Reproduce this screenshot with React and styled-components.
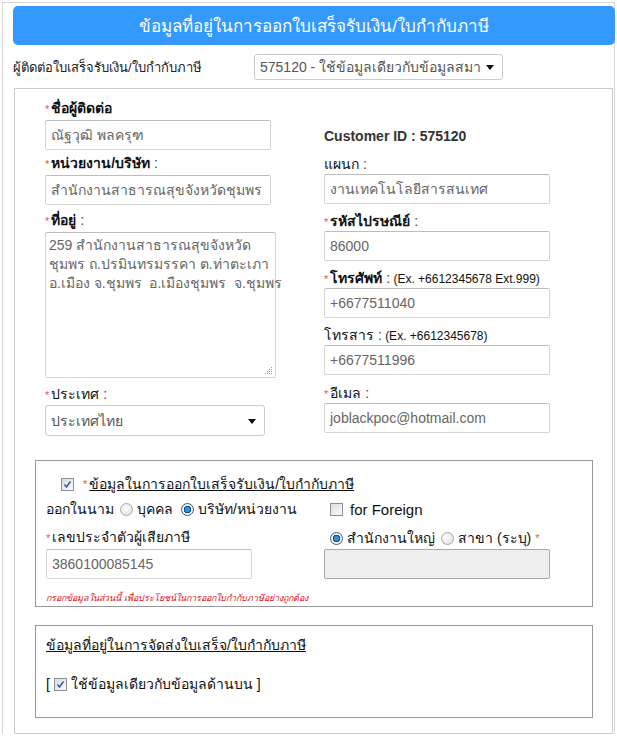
import styled, {createGlobalStyle} from "styled-components";

const GlobalStyle = createGlobalStyle`
  body {
    margin: 0;
    background: #fff;
    font-family: Tahoma, "Liberation Sans", "DejaVu Sans", sans-serif;
    font-size: 14px;
    color: #222;
  }
`;

const Frame = styled.div`
  margin: 2px 0 0 2px;
  width: 613px;
  border: 1px solid #d6d6d6;
  border-bottom: none;
  padding: 3px 0 0 10px;
  box-sizing: border-box;
`;

const Banner = styled.div`
  height: 39px;
  margin-right: -1px;
  background: #3399ff;
  border-radius: 5px;
  display: flex;
  align-items: center;
  justify-content: center;
  color: #fff;
  font-size: 17px;
`;

const ContactRow = styled.div`
  display: flex;
  align-items: center;
  margin-top: 9px;
  font-size: 13px;
`;

const ContactLabel = styled.div`
  width: 241px;
`;

const SelectBox = styled.div`
  position: relative;
  width: ${p => p.$w}px;
  height: ${p => p.$h || 26}px;
  margin-top: ${p => p.$mt || 0}px;
  border: 1px solid #ccc;
  border-radius: 3px;
  box-sizing: border-box;
  padding: 0 20px 0 5px;
  display: flex;
  align-items: center;
  color: #555;
  font-size: 14px;
  background: #fff;

  &::after {
    content: "";
    position: absolute;
    right: 8px;
    top: 50%;
    margin-top: -2px;
    border-left: 4px solid transparent;
    border-right: 4px solid transparent;
    border-top: 5px solid #111;
  }
`;

const SelectValue = styled.span`
  flex: 1;
  overflow: hidden;
  white-space: nowrap;
`;

const Panel = styled.div`
  margin: 8px 0 0 1px;
  width: 599px;
  border: 1px solid #ccc;
  box-sizing: border-box;
  padding: 10px 20px 15px 20px;
`;

const Columns = styled.div`
  display: grid;
  grid-template-columns: 279px 1fr;
  padding-left: 10px;
`;

const Column = styled.div`
  display: flex;
  flex-direction: column;
`;

const Field = styled.div`
  display: flex;
  flex-direction: column;
  margin-top: ${p => p.$mt || 0}px;
`;

const Label = styled.div`
  line-height: 18px;
  height: 18px;
  font-size: 14px;
  font-weight: ${p => (p.$bold ? 700 : 400)};
  color: #111;
  white-space: nowrap;
`;

const Star = styled.span`
  color: #f0504a;
  font-size: 11px;
  font-weight: 400;
  margin-right: 2px;
`;

const Colon = styled.span`
  font-weight: 400;
  color: #444;
`;

const Hint = styled.span`
  font-weight: 400;
  font-size: 12px;
  color: #111;
`;

const Input = styled.div`
  margin-top: ${p => p.$mt ?? 3}px;
  width: ${p => p.$w || 226}px;
  height: 30px;
  border: 1px solid #d4d4d4;
  border-top-color: #bdbdbd;
  border-radius: 2px;
  box-sizing: border-box;
  padding: 0 5px;
  display: flex;
  align-items: center;
  color: #666;
  font-size: 14px;
  background: ${p => (p.$disabled ? "#eee" : "#fff")};
  ${p => p.$disabled && "border-color: #aaa;"}
  white-space: nowrap;
`;

const TextArea = styled.div`
  position: relative;
  margin-top: 3px;
  width: 231px;
  height: 146px;
  border: 1px solid #d4d4d4;
  border-top-color: #bdbdbd;
  border-radius: 2px;
  box-sizing: border-box;
  padding: 3px 3px;
  color: #666;
  font-size: 14px;
  line-height: 19px;
  white-space: pre;
`;

const Grip = styled.svg`
  position: absolute;
  right: 2px;
  bottom: 2px;
`;

const CustomerId = styled.div`
  margin-top: 28px;
  font-weight: 700;
  font-size: 14px;
  color: #333;
  line-height: 18px;
`;

const Box = styled.div`
  margin-top: ${p => p.$mt}px;
  width: 558px;
  border: 1px solid #999;
  box-sizing: border-box;
  padding: ${p => p.$pad};
`;

const TitleLine = styled.div`
  display: flex;
  align-items: center;
  height: 20px;
  margin-left: ${p => p.$indent || 0}px;
`;

const Underlined = styled.span`
  text-decoration: underline;
  font-size: 14px;
  color: #111;
`;

const TaxGrid = styled.div`
  display: grid;
  grid-template-columns: 278px 1fr;
  margin-top: ${p => p.$mt || 0}px;
  align-items: center;
`;

const Inline = styled.div`
  display: flex;
  align-items: center;
  height: 20px;
  margin-top: ${p => p.$mt || 0}px;
  white-space: nowrap;
  color: #111;
  font-size: ${p => p.$size || 14}px;
`;

const Gap = styled.span`
  display: inline-block;
  width: ${p => p.$w}px;
`;

const RadioDot = styled.span`
  display: inline-block;
  flex: none;
  width: 13px;
  height: 13px;
  border-radius: 50%;
  box-sizing: border-box;
  border: 1px solid ${p => (p.$on ? "#3a5a7a" : "#a8a8a8")};
  background: ${p =>
    p.$on
      ? "radial-gradient(circle at 50% 50%, #2f8fe0 0 2.5px, #0a4f8a 3px 3.5px, #f4f4f4 4px)"
      : "radial-gradient(circle at 40% 40%, #fff 0, #e6e6e6 70%)"};
  margin-right: 4px;
`;

const CheckSquare = styled.span`
  display: inline-flex;
  flex: none;
  align-items: center;
  justify-content: center;
  width: 13px;
  height: 13px;
  box-sizing: border-box;
  border: 1px solid #8f8f9a;
  background: linear-gradient(135deg, #dcdce0, #fafafa);
  margin-right: ${p => p.$mr || 0}px;
`;

const Note = styled.div`
  margin-top: 12px;
  color: #e8101a;
  font-style: italic;
  font-size: 9px;
  line-height: 14px;
`;

function Check({on, mr}) {
    return (
        <CheckSquare $mr={mr}>
            {on && (
                <svg width="9" height="9" viewBox="0 0 9 9">
                    <path d="M1.5 4.5 L3.5 7 L7.5 1.5" fill="none" stroke="#3b5fa8" strokeWidth="1.6"/>
                </svg>
            )}
        </CheckSquare>
    );
}

function FormField({label, bold, required, colon, hint, mt, children}) {
    return (
        <Field $mt={mt}>
            <Label $bold={bold}>
                {required && <Star>*</Star>}
                {label}
                {colon && <Colon> :</Colon>}
                {hint && <Hint> {hint}</Hint>}
            </Label>
            {children}
        </Field>
    );
}

export default function App() {
    return (
        <>
            <GlobalStyle/>
            <Frame>
                <Banner>ข้อมูลที่อยู่ในการออกใบเสร็จรับเงิน/ใบกำกับภาษี</Banner>
                <ContactRow>
                    <ContactLabel>ผู้ติดต่อใบเสร็จรับเงิน/ใบกำกับภาษี</ContactLabel>
                    <SelectBox $w={249}>
                        <SelectValue>575120 - ใช้ข้อมูลเดียวกับข้อมูลสมาชิก</SelectValue>
                    </SelectBox>
                </ContactRow>
                <Panel>
                    <Columns>
                        <Column>
                            <FormField label="ชื่อผู้ติดต่อ" bold required>
                                <Input>ณัฐวุฒิ พลครุฑ</Input>
                            </FormField>
                            <FormField label="หน่วยงาน/บริษัท" bold required colon mt={4}>
                                <Input>สำนักงานสาธารณสุขจังหวัดชุมพร</Input>
                            </FormField>
                            <FormField label="ที่อยู่" bold required colon mt={6}>
                                <TextArea>
                                    {"259 สำนักงานสาธารณสุขจังหวัด\nชุมพร ถ.ปรมินทรมรรคา ต.ท่าตะเภา\nอ.เมือง จ.ชุมพร  อ.เมืองชุมพร  จ.ชุมพร"}
                                    <Grip width="8" height="8" viewBox="0 0 8 8">
                                        <g fill="#999">
                                            <rect x="6" y="0" width="1" height="1"/>
                                            <rect x="4" y="2" width="1" height="1"/>
                                            <rect x="6" y="2" width="1" height="1"/>
                                            <rect x="2" y="4" width="1" height="1"/>
                                            <rect x="4" y="4" width="1" height="1"/>
                                            <rect x="6" y="4" width="1" height="1"/>
                                            <rect x="0" y="6" width="1" height="1"/>
                                            <rect x="2" y="6" width="1" height="1"/>
                                            <rect x="4" y="6" width="1" height="1"/>
                                            <rect x="6" y="6" width="1" height="1"/>
                                        </g>
                                    </Grip>
                                </TextArea>
                            </FormField>
                            <FormField label="ประเทศ" required colon mt={7}>
                                <SelectBox $w={220} $h={31} $mt={2}>
                                    <SelectValue>ประเทศไทย</SelectValue>
                                </SelectBox>
                            </FormField>
                        </Column>
                        <Column>
                            <CustomerId>Customer ID : 575120</CustomerId>
                            <FormField label="แผนก" colon mt={10}>
                                <Input $mt={1}>งานเทคโนโลยีสารสนเทศ</Input>
                            </FormField>
                            <FormField label="รหัสไปรษณีย์" bold required colon mt={8}>
                                <Input $mt={1}>86000</Input>
                            </FormField>
                            <FormField label="โทรศัพท์" bold required colon hint="(Ex. +6612345678 Ext.999)" mt={8}>
                                <Input $mt={1}>+6677511040</Input>
                            </FormField>
                            <FormField label="โทรสาร" colon hint="(Ex. +6612345678)" mt={8}>
                                <Input $mt={1}>+6677511996</Input>
                            </FormField>
                            <FormField label="อีเมล" required colon mt={9}>
                                <Input $mt={1}>joblackpoc@hotmail.com</Input>
                            </FormField>
                        </Column>
                    </Columns>

                    <Box $mt={24} $pad="13px 10px 1px 10px">
                        <TitleLine $indent={15}>
                            <Check on mr={9}/>
                            <Star>*</Star>
                            <Underlined>ข้อมูลในการออกใบเสร็จรับเงิน/ใบกำกับภาษี</Underlined>
                        </TitleLine>
                        <TaxGrid $mt={5}>
                            <Inline>
                                ออกในนาม<Gap $w={6}/>
                                <RadioDot/>บุคคล<Gap $w={8}/>
                                <RadioDot $on/>บริษัท/หน่วยงาน
                            </Inline>
                            <Inline $size={15}>
                                <Gap $w={6}/>
                                <Check mr={7}/>for Foreign
                            </Inline>
                        </TaxGrid>
                        <TaxGrid $mt={9}>
                            <Field>
                                <Label><Star>*</Star>เลขประจำตัวผู้เสียภาษี</Label>
                                <Input $w={206}>3860100085145</Input>
                            </Field>
                            <Field>
                                <Label>
                                    <Inline>
                                        <Gap $w={6}/>
                                        <RadioDot $on/>สำนักงานใหญ่<Gap $w={6}/>
                                        <RadioDot/>สาขา (ระบุ)<Gap $w={4}/><Star>*</Star>
                                    </Inline>
                                </Label>
                                <Input $disabled/>
                            </Field>
                        </TaxGrid>
                        <Note>กรอกข้อมูลในส่วนนี้ เพื่อประโยชน์ในการออกใบกำกับภาษีอย่างถูกต้อง</Note>
                    </Box>

                    <Box $mt={18} $pad="9px 10px 23px 10px">
                        <TitleLine>
                            <Underlined>ข้อมูลที่อยู่ในการจัดส่งใบเสร็จ/ใบกำกับภาษี</Underlined>
                        </TitleLine>
                        <Inline $mt={19}>
                            [<Gap $w={4}/><Check on mr={4}/>ใช้ข้อมูลเดียวกับข้อมูลด้านบน ]
                        </Inline>
                    </Box>
                </Panel>
            </Frame>
        </>
    );
}
